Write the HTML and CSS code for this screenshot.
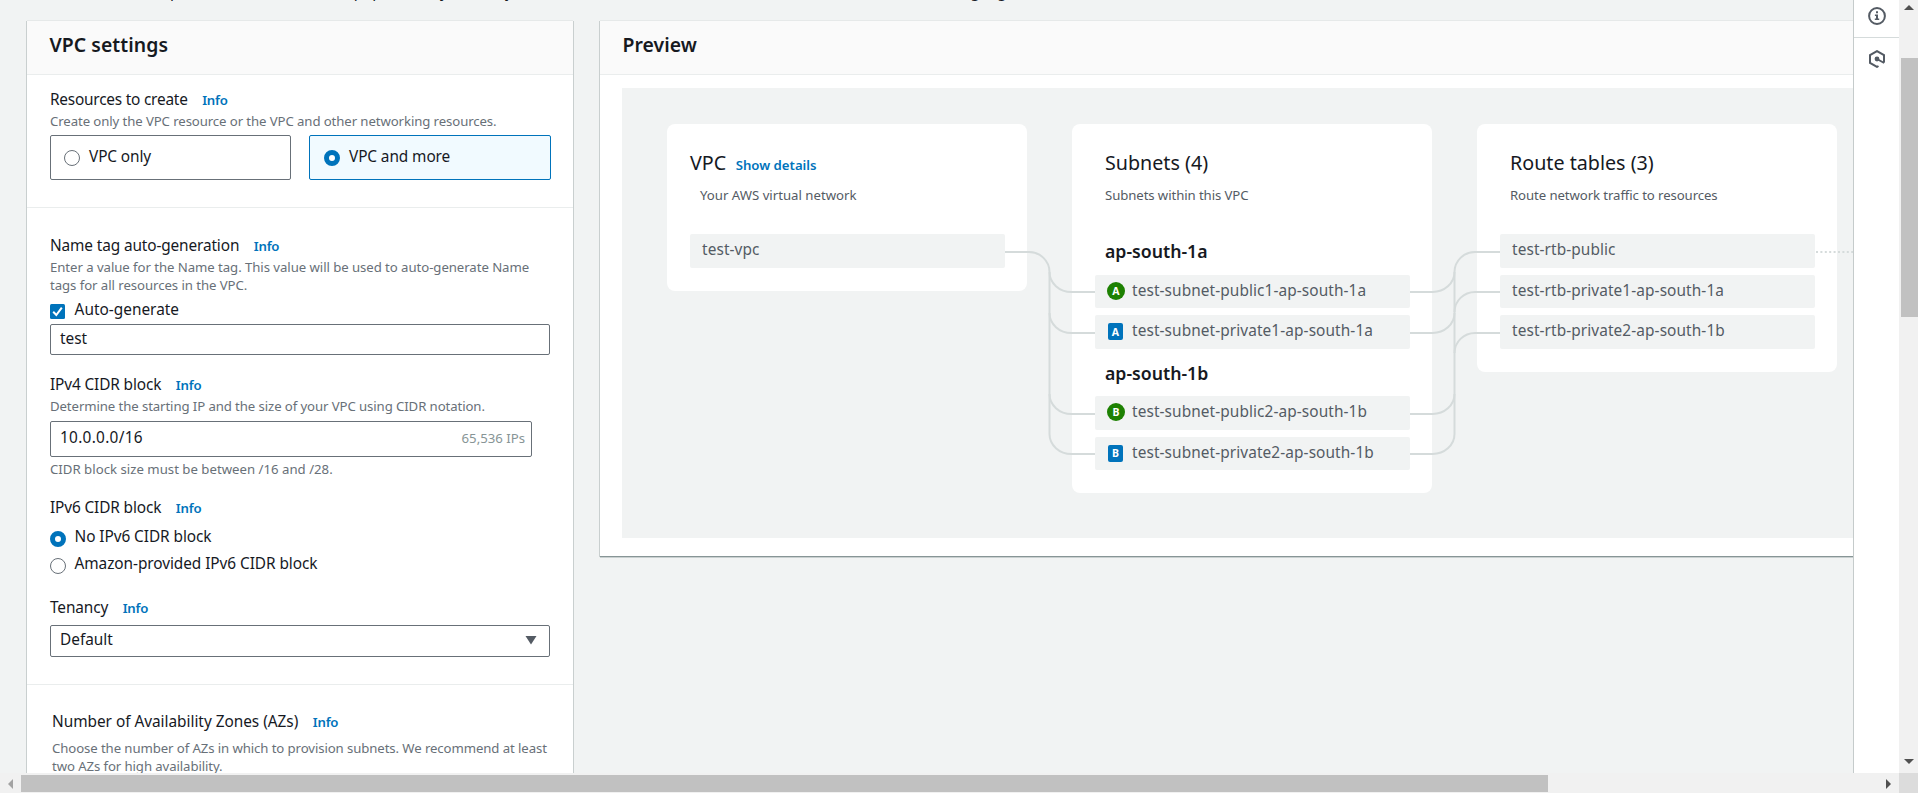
FILE: index.html
```html
<!DOCTYPE html>
<html lang="en">
<head>
<meta charset="utf-8">
<title>Create VPC</title>
<link rel="stylesheet" href="styles.css">
</head>
<body>
<div class="shell">
  <main class="page">
    <p class="intro">A VPC is an isolated portion of the AWS Cloud populated by AWS objects, such as Amazon EC2 instances. Mouse over a resource to highlight the related resources.</p>
    <div class="columns">
      <section class="panel settings">
        <header class="panel-head"><h2>VPC settings</h2></header>
        <div class="group">
          <div class="label label-low"><span class="tight">Resources to create</span><a class="info">Info</a></div>
          <div class="desc">Create only the VPC resource or the VPC and other networking resources.</div>
          <div class="tiles">
            <div class="tile"><i class="radio"></i><span>VPC only</span></div>
            <div class="tile tile-on"><i class="radio radio-on"></i><span>VPC and more</span></div>
          </div>
        </div>
        <div class="group group-main">
          <div class="label label-low"><span>Name tag auto-generation</span><a class="info">Info</a></div>
          <div class="desc desc-wide">Enter a value for the Name tag. This value will be used to auto-generate Name<br>tags for all resources in the VPC.</div>
          <div class="choice choice-check">
            <svg class="check" viewBox="0 0 15 15"><rect width="15" height="15" rx="1.5"/><path d="M3.2 7.8 6.3 11 11.8 3.6"/></svg>
            <span>Auto-generate</span>
          </div>
          <div class="input input-name">test</div>
          <div class="label label-v4 label-low"><span>IPv4 CIDR block</span><a class="info">Info</a></div>
          <div class="desc">Determine the starting IP and the size of your VPC using CIDR notation.</div>
          <div class="input input-cidr"><span class="digits">10.0.0.0/16</span><span class="ips">65,536 IPs</span></div>
          <div class="desc hint">CIDR block size must be between /16 and /28.</div>
          <div class="label label-v6"><span>IPv6 CIDR block</span><a class="info">Info</a></div>
          <div class="choice choice-first"><i class="radio radio-on"></i><span>No IPv6 CIDR block</span></div>
          <div class="choice choice-next"><i class="radio"></i><span>Amazon-provided IPv6 CIDR block</span></div>
          <div class="label label-tenancy"><span>Tenancy</span><a class="info">Info</a></div>
          <div class="input select"><span>Default</span><svg class="caret" viewBox="0 0 12 10"><path d="M.5 1h11L6 9.5z"/></svg></div>
        </div>
        <div class="group group-az">
          <div class="label"><span class="loose">Number of Availability Zones (AZs)</span><a class="info">Info</a></div>
          <div class="desc">Choose the number of AZs in which to provision subnets. We recommend at least<br>two AZs for high availability.</div>
        </div>
      </section>

      <section class="panel preview">
        <header class="panel-head"><h2>Preview</h2></header>
        <div class="canvas">
          <div class="card card-vpc">
            <div class="card-title">VPC<a class="show">Show details</a></div>
            <div class="card-sub">Your AWS virtual network</div>
            <div class="chips"><div class="chip">test-vpc</div></div>
          </div>
          <div class="card">
            <div class="card-title">Subnets (4)</div>
            <div class="card-sub">Subnets within this VPC</div>
            <h3 class="zone">ap-south-1a</h3>
            <div class="chips">
              <div class="chip"><b class="badge badge-public">A</b>test-subnet-public1-ap-south-1a</div>
              <div class="chip"><b class="badge">A</b>test-subnet-private1-ap-south-1a</div>
            </div>
            <h3 class="zone">ap-south-1b</h3>
            <div class="chips">
              <div class="chip"><b class="badge badge-public">B</b>test-subnet-public2-ap-south-1b</div>
              <div class="chip"><b class="badge">B</b>test-subnet-private2-ap-south-1b</div>
            </div>
          </div>
          <div class="card">
            <div class="card-title">Route tables (3)</div>
            <div class="card-sub">Route network traffic to resources</div>
            <div class="chips">
              <div class="chip">test-rtb-public</div>
              <div class="chip">test-rtb-private1-ap-south-1a</div>
              <div class="chip">test-rtb-private2-ap-south-1b</div>
            </div>
          </div>
          <svg class="links" viewBox="622 88 1232 450">
            <path d="M1005 252H1029A20.500 20 0 0 1 1049.500 272V434A22 20 0 0 0 1071.500 454H1095"/>
            <path d="M1049.500 272A22 20 0 0 0 1071.500 292H1095"/>
            <path d="M1049.500 313A22 20 0 0 0 1071.500 333H1095"/>
            <path d="M1049.500 394A22 20 0 0 0 1071.500 414H1095"/>
            <path d="M1410 454H1432A22 20 0 0 0 1454.500 434V272A20.500 20 0 0 1 1475 252H1500"/>
            <path d="M1410 292H1432A22 20 0 0 0 1454.500 272"/>
            <path d="M1410 333H1432A22 20 0 0 0 1454.500 313"/>
            <path d="M1410 414H1432A22 20 0 0 0 1454.500 394"/>
            <path d="M1454.500 312A20.500 20 0 0 1 1475 292H1500"/>
            <path d="M1454.500 353A20.500 20 0 0 1 1475 333H1500"/>
            <path class="dotted" d="M1816 252H1854"/>
          </svg>
        </div>
      </section>
    </div>
  </main>

  <aside class="rail">
    <div class="rail-item"><svg viewBox="0 0 18 18"><circle cx="9" cy="9" r="7.900"/><path class="solid" d="M8 4.200h2v2H8zM6.900 7.400H10v4h1.200V13H6.800v-1.600H8V9H6.900z"/></svg></div>
    <div class="rail-item"><svg viewBox="0 0 18 18"><path d="M10.500 16 9 16.900l-7-4V5.100l7-4 7 4v7.500M9 9l7.200 4"/><circle class="solid" cx="9" cy="9" r="2.400"/></svg></div>
  </aside>

  <div class="vbar">
    <svg class="arrow" viewBox="0 0 10 5"><path d="M0 5 5 0l5 5z"/></svg>
    <div class="vthumb"></div>
    <svg class="arrow" viewBox="0 0 10 5"><path d="M0 0h10L5 5z"/></svg>
  </div>
  <div class="hbar">
    <svg class="arrow-h arrow-off" viewBox="0 0 5 10"><path d="M5 0v10L0 5z"/></svg>
    <div class="hthumb"></div>
    <svg class="arrow-h" viewBox="0 0 5 10"><path d="M0 0v10l5-5z"/></svg>
  </div>
  <div class="corner"></div>
</div>
</body>
</html>
```
FILE: styles.css
```css
* { box-sizing: border-box; }
body {
  margin: 0;
  overflow: hidden;
  background: #f2f3f3;
  color: #16191f;
  font: 15.4px/24px "Noto Sans", "Open Sans", sans-serif;
}
h2, h3, p { margin: 0; }
svg { display: block; }

.shell {
  display: grid;
  grid-template-columns: 1854px 45px 19px;
  grid-template-rows: 773px 20px;
  width: 1918px;
  height: 793px;
}
.page { overflow: hidden; padding-left: 27px; background: #f1f3f3; }
.intro { margin-top: -18px; height: 39px; line-height: 20px; white-space: nowrap; letter-spacing: -.08px; }
.columns { display: flex; align-items: flex-start; gap: 27px; }

.panel {
  background: #fff;
  box-shadow: -1px 0 0 #c9cfcf, 1px 0 0 #c9cfcf, 0 -1px 0 #e6e9e9;
}
.settings { flex: none; width: 546px; height: 800px; }
.preview { flex: none; width: 1400px; height: 536px; border-bottom: 1px solid #879596; box-shadow: -1px 0 0 #c9cfcf, 0 1px 0 #c9d0d0, 0 -1px 0 #e6e9e9; }
.panel-head { height: 54px; padding: 12px 22.500px 0; background: #fafafa; border-bottom: 1px solid #eaeded; }
.panel-head h2 { font-size: 19.4px; font-weight: 600; line-height: 24px; letter-spacing: .06px; white-space: nowrap; }

.group { padding: 12px 22px 27px 23px; border-bottom: 1px solid #eaeded; }
.group-main { padding-top: 25px; }
.group-az { padding: 25px 20px 0 25px; border: 0; }
.label { display: flex; gap: 14.500px; height: 24px; letter-spacing: -.13px; white-space: nowrap; }
.label-low { padding-top: 1px; }
.tight { letter-spacing: -.22px; }
.loose { letter-spacing: -.03px; }
.info { color: #0073bb; font-size: 13.2px; font-weight: 600; letter-spacing: -.2px; }
.desc { margin-top: 1px; color: #687078; font-size: 13.2px; line-height: 18px; letter-spacing: -.095px; white-space: nowrap; }
.desc-wide { letter-spacing: -.06px; }
.group-az .desc { margin-top: 5px; }

.tiles { display: grid; grid-template-columns: 241px 242px; gap: 18px; margin-top: 5px; }
.tile { display: flex; gap: 9px; height: 45px; padding: 9px 0 0 13px; border: 1px solid #687078; border-radius: 2px; letter-spacing: -.1px; }
.tile-on { padding-left: 14px; border-color: #0073bb; background: #f1faff; }
.radio { flex: none; width: 16px; height: 16px; margin-top: 5px; border: 1px solid #687078; border-radius: 50%; background: #fff; }
.radio-on { border: 5px solid #0073bb; }

.choice { display: flex; gap: 8.500px; height: 24px; letter-spacing: -.07px; }
.choice .radio { margin-top: 6px; }
.choice-check { margin-top: 4px; gap: 9.6px; letter-spacing: 0; }
.check { width: 15px; height: 15px; margin-top: 6px; fill: #0073bb; }
.check path { fill: none; stroke: #fff; stroke-width: 2; }
.choice-first { margin-top: 5px; }
.choice-next { margin-top: 3px; }

.input { display: flex; align-items: center; width: 500px; padding: 0 7px 2px 9px; border: 1px solid #687078; border-radius: 2px; background: #fff; }
.input-name { height: 31px; margin-top: 2px; }
.input-cidr { justify-content: space-between; width: 482px; height: 36px; margin-top: 6px; padding: 0 6px 3px 9px; }
.digits { letter-spacing: .28px; }
.ips { color: #879596; font-size: 13.2px; }
.hint { margin-top: 3px; letter-spacing: .01px; }
.label-v4 { margin-top: 17px; }
.label-v6 { margin-top: 18px; }
.label-tenancy { margin-top: 20px; }
.select { justify-content: space-between; height: 32px; margin-top: 5px; padding-right: 12px; }
.caret { width: 12px; height: 10px; fill: #545b64; }

.canvas { position: relative; display: flex; align-items: flex-start; gap: 45px; width: 1378px; height: 450px; margin: 13px 0 0 22px; padding: 36px 0 0 45px; background: #f1f3f3; }
.card { flex: none; width: 360px; padding: 25px 22px 23px 23px; border-radius: 8px; background: #fff; }
.card-title { height: 28px; padding-left: 10px; font-size: 19.7px; line-height: 28px; white-space: nowrap; }
.card-vpc .card-title { padding-left: 0; }
.show { margin-left: 9.500px; color: #0073bb; font-size: 13.2px; font-weight: 600; line-height: 1; }
.card-sub { margin: 9px 0 30px; padding-left: 10px; color: #545b64; font-size: 13.2px; line-height: 18px; letter-spacing: -.09px; }
.card-vpc .card-sub { letter-spacing: 0; }
.zone { margin: 12px 0; padding-left: 10px; font-size: 17.700px; font-weight: 600; line-height: 24px; height: 23.500px; }
.card-sub + .zone { margin-top: 35px; }
.chips { display: grid; gap: 7px; }
.chip { display: flex; align-items: center; height: 33.600px; padding: 0 0 1px 12px; border-radius: 2px; background: #f1f3f3; color: #545b64; letter-spacing: .09px; white-space: nowrap; }
.badge { display: flex; align-items: center; justify-content: center; width: 15px; height: 17px; margin: 1px 9px 0 1px; border-radius: 2px; background: #0073bb; color: #fff; font-size: 10.500px; line-height: 1; font-weight: 700; }
.badge-public { width: 18px; height: 18px; margin: 0 7px 0 0; border-radius: 50%; background: #1d8102; }
.links { position: absolute; left: 0; top: 0; width: 1232px; height: 450px; fill: none; stroke: #d5dbdb; stroke-width: 2; }
.dotted { stroke-dasharray: 2 2.400; }

.rail { background: #fff; box-shadow: -1px 0 0 #c5cbcb; position: relative; }
.rail-item { display: flex; align-items: center; justify-content: center; height: 41px; }
.rail-item:first-child { height: 38px; padding-bottom: 6px; border-bottom: 1px solid #d5dbdb; }
.rail svg { width: 18px; height: 18px; margin-left: 1px; fill: none; stroke: #545b64; stroke-width: 2; }
.rail .solid { fill: #545b64; stroke: none; }

.vbar { display: flex; flex-direction: column; justify-content: space-between; padding: 5px 0 9px 2px; background: #f1f1f1; }
.arrow { width: 10px; height: 5px; margin-left: 3px; fill: #505050; }
.vthumb { width: 17px; height: 259px; margin: 48px 0 auto; background: #c1c1c1; }
.hbar { grid-column: 1 / 3; display: flex; align-items: center; padding: 1px 8px 0; background: #f1f1f1; }
.arrow-h { width: 5px; height: 10px; margin-left: auto; fill: #505050; }
.arrow-off { margin: 0 8px 0 0; fill: #a3a3a3; }
.hthumb { width: 1527px; height: 17px; background: #c1c1c1; }
.corner { background: #dcdcdc; }
```
